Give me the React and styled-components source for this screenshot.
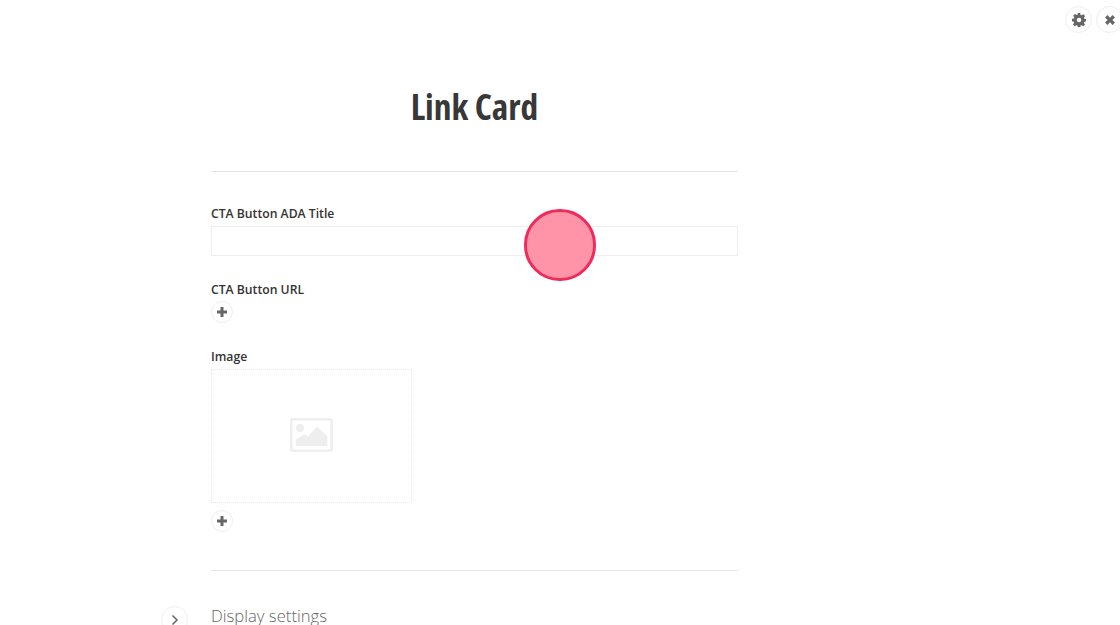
import React from "react";
import styled, { createGlobalStyle } from "styled-components";

const Global = createGlobalStyle`
  html, body { margin: 0; padding: 0; height: 625px; overflow: hidden; background: #fff; }
  body { font-family: "Open Sans", "Noto Sans", sans-serif; color: #333; }
`;
const Page = styled.div`position: relative; width: 1120px; height: 625px; overflow: hidden;`;
const TopActions = styled.div`
  position: absolute; top: 6px; left: 1065px; display: flex; gap: 4px;
`;
const RoundButton = styled.button`
  width: ${p => p.$size}px; height: ${p => p.$size}px; flex: none; padding: 0;
  display: flex; align-items: center; justify-content: center;
  background: #fff; border: 1px solid #eee; border-radius: 50%; color: #666;
`;
const Column = styled.main`
  width: 527px; margin-left: 211px; padding-top: 81px; display: flex; flex-direction: column;
`;
const Title = styled.h1`
  margin: 0 0 40px; height: 50px; text-align: center; font-size: 35.5px; line-height: 50px; font-weight: 700;
  font-stretch: 75%; color: #383838;
`;
const Rule = styled.hr`margin: 0; border: 0; border-top: 1px solid #e4e4e4; height: 0;`;
const Fields = styled.div`padding-top: 33px; padding-bottom: 38px; display: flex; flex-direction: column;`;
const Label = styled.label`
  display: block; font-size: 12.2px; line-height: 18px; font-weight: 600; color: #333;
`;
const Field = styled.div`display: flex; flex-direction: column; align-items: flex-start; margin-bottom: ${p => p.$mb}px;`;
const TextInput = styled.input`
  box-sizing: border-box; width: 100%; height: 30px; margin-top: 3px; border: 1px solid #eee; background: #fff; outline: none; padding: 0 8px;
`;
const AddRow = styled.div`margin-top: ${p => p.$mt}px;`;
const ImageBox = styled.div`
  box-sizing: border-box; width: 201px; height: 134px; margin-top: 3px; border: 1px dotted #e6e6e6;
  display: flex; align-items: center; justify-content: center; padding-bottom: 3px;
`;
const Disclosure = styled.section`position: relative; display: flex; align-items: center; height: 30px; margin-top: 30px;`;
const DisclosureToggle = styled(RoundButton)`position: absolute; left: -50px; top: 5px;`;
const DisclosureTitle = styled.h2`
  margin: 0; font-size: 16.7px; line-height: 30px; font-weight: 300; color: #666;
`;
const Cursor = styled.div`
  position: absolute; left: 524.2px; top: 209.2px; width: 71.5px; height: 71.5px; box-sizing: border-box;
  border-radius: 50%; border: 3.5px solid #ef2a5c; background: #ff94a9;
`;

const Plus = () => (
  <svg width="12" height="12" viewBox="0 0 12 12"><path d="M4.5 1h3v3.5H11v3H7.5V11h-3V7.5H1v-3h3.5z" fill="#666" /></svg>
);
const Gear = () => (
  <svg width="14" height="14" viewBox="0 0 16 16">
    <path fill="#666" fillRule="evenodd" d="M6.6 0h2.8l.4 2.2 1.2.5 1.9-1.3 2 2-1.3 1.9.5 1.2 2.2.4v2.8l-2.2.4-.5 1.2 1.3 1.9-2 2-1.9-1.3-1.2.5-.4 2.2H6.6l-.4-2.2-1.2-.5-1.9 1.3-2-2 1.3-1.9-.5-1.2L0 9.4V6.6l2.2-.4.5-1.2-1.3-1.9 2-2 1.9 1.3 1.2-.5zM8 5.4a2.6 2.6 0 1 0 0 5.2 2.6 2.6 0 0 0 0-5.2z" />
  </svg>
);
const Cross = () => (
  <svg width="10" height="10" viewBox="0 0 12 12"><path d="M3 0 6 3.2 9 0l3 3-3.2 3L12 9l-3 3-3-3.2L3 12 0 9l3.2-3L0 3z" fill="#666" /></svg>
);
const Chevron = () => (
  <svg width="10" height="12" viewBox="0 0 10 12"><path d="M2.5 1.5 7 6l-4.5 4.5" fill="none" stroke="#666" strokeWidth="1.5" /></svg>
);
const Picture = () => (
  <svg width="43" height="34" viewBox="0 0 43 34">
    <rect x="1.25" y="1.25" width="40.5" height="31.5" rx="2" fill="none" stroke="#eee" strokeWidth="2.5" />
    <circle cx="10" cy="10" r="4" fill="#eee" />
    <path d="M5.7 28v-6.3L15 16l3 3 8.7-10.7L37.3 18.3V28z" fill="#eee" />
  </svg>
);

export default function App() {
  return (
    <Page>
      <Global />
      <TopActions>
        <RoundButton $size={27}><Gear /></RoundButton>
        <RoundButton $size={27}><Cross /></RoundButton>
      </TopActions>
      <Column>
        <Title>Link Card</Title>
        <Rule />
        <Fields>
          <Field $mb={25}>
            <Label>CTA Button ADA Title</Label>
            <TextInput />
          </Field>
          <Field $mb={25}>
            <Label>CTA Button URL</Label>
            <AddRow $mt={2}><RoundButton $size={22}><Plus /></RoundButton></AddRow>
          </Field>
          <Field $mb={0}>
            <Label>Image</Label>
            <ImageBox><Picture /></ImageBox>
            <AddRow $mt={7}><RoundButton $size={22}><Plus /></RoundButton></AddRow>
          </Field>
        </Fields>
        <Rule />
        <Disclosure>
          <DisclosureToggle $size={27}><Chevron /></DisclosureToggle>
          <DisclosureTitle>Display settings</DisclosureTitle>
        </Disclosure>
      </Column>
      <Cursor />
    </Page>
  );
}
